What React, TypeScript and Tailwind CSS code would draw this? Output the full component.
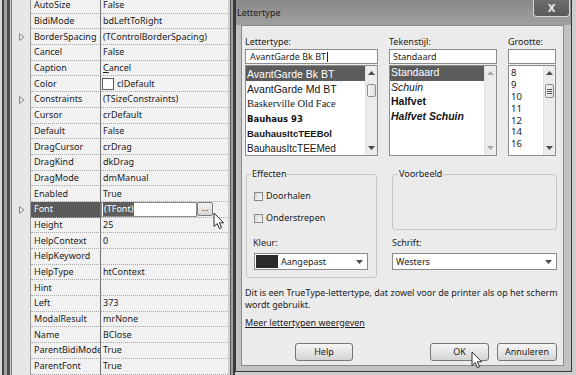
import React from 'react';

type Prop = {
  name: string;
  value: string;
  expand?: boolean;
  kind?: 'caption' | 'color' | 'font';
};

const props: Prop[] = [
  { name: 'AutoSize', value: 'False' },
  { name: 'BidiMode', value: 'bdLeftToRight' },
  { name: 'BorderSpacing', value: '(TControlBorderSpacing)', expand: true },
  { name: 'Cancel', value: 'False' },
  { name: 'Caption', value: 'Cancel', kind: 'caption' },
  { name: 'Color', value: 'clDefault', kind: 'color' },
  { name: 'Constraints', value: '(TSizeConstraints)', expand: true },
  { name: 'Cursor', value: 'crDefault' },
  { name: 'Default', value: 'False' },
  { name: 'DragCursor', value: 'crDrag' },
  { name: 'DragKind', value: 'dkDrag' },
  { name: 'DragMode', value: 'dmManual' },
  { name: 'Enabled', value: 'True' },
  { name: 'Font', value: '(TFont)', expand: true, kind: 'font' },
  { name: 'Height', value: '25' },
  { name: 'HelpContext', value: '0' },
  { name: 'HelpKeyword', value: '' },
  { name: 'HelpType', value: 'htContext' },
  { name: 'Hint', value: '' },
  { name: 'Left', value: '373' },
  { name: 'ModalResult', value: 'mrNone' },
  { name: 'Name', value: 'BClose' },
  { name: 'ParentBidiMode', value: 'True' },
  { name: 'ParentFont', value: 'True' },
];

const Pointer = ({ className }: { className: string }) => (
  <svg className={className} width="12" height="18" viewBox="0 0 12 18">
    <path
      d="M1 1 L1 14.5 L4.2 11.6 L6.4 16.6 L8.6 15.6 L6.4 10.8 L10.6 10.8 Z"
      fill="#fff"
      stroke="#2a2a2a"
      strokeWidth="1"
      strokeLinejoin="round"
    />
  </svg>
);

const Tri = () => (
  <svg width="6" height="8" viewBox="0 0 6 8">
    <path d="M0.5 0.5 L5 4 L0.5 7.5 Z" fill="none" stroke="#8c8c8c" />
  </svg>
);

const Up = ({ color = '#4a4a4a' }: { color?: string }) => (
  <svg width="7" height="4" viewBox="0 0 7 4">
    <path d="M0 4 L3.5 0 L7 4 Z" fill={color} />
  </svg>
);

const Down = ({ color = '#4a4a4a' }: { color?: string }) => (
  <svg width="7" height="4" viewBox="0 0 7 4">
    <path d="M0 0 L7 0 L3.5 4 Z" fill={color} />
  </svg>
);

function PropRow({ p }: { p: Prop }) {
  const sel = p.kind === 'font';
  return (
    <div className="flex h-[15.7px] shrink-0 leading-[14px]">
      <div className="w-[19px] flex items-center pl-[7px] bg-[#e7e7e7] border-r border-r-[#9c9c9c]">
        {p.expand && <Tri />}
      </div>
      <div
        className={`w-[70px] pl-[3px] flex items-center whitespace-nowrap overflow-hidden border-r border-r-[#707070] border-b border-b-[#a6a6a6] [border-bottom-style:dotted] ${
          sel ? 'bg-[#5b5b5b] text-white' : ''
        }`}
      >
        {p.name}
      </div>
      <div className="flex-1 flex items-center whitespace-nowrap overflow-hidden border-b border-b-[#a6a6a6] [border-bottom-style:dotted]">
        {p.kind === 'font' ? (
          <>
            <div className="w-[96px] h-full bg-white border border-[#8c8c8c] flex items-center pl-[1px]">
              <span className="bg-[#5e5e5e] text-white px-[1px]">{p.value}</span>
            </div>
            <div className="w-[16px] h-[14px] border border-[#7c7c7c] rounded-[2px] bg-linear-to-b from-[#f4f4f4] to-[#d6d6d6] flex items-center justify-center leading-[8px] pb-[3px] text-[#333]">
              ...
            </div>
          </>
        ) : p.kind === 'color' ? (
          <div className="flex items-center pl-[1px]">
            <div className="w-[12px] h-[12px] border border-[#5a5a5a] bg-white" />
            <span className="ml-[3px]">{p.value}</span>
          </div>
        ) : p.kind === 'caption' ? (
          <span className="pl-[2px]">
            <span className="underline">C</span>ancel
          </span>
        ) : (
          <span className="pl-[2px]">{p.value}</span>
        )}
      </div>
    </div>
  );
}

function Inspector() {
  return (
    <div className="flex w-[235px] h-full shrink-0">
      <div className="w-[2px] bg-[#d8d8d8]" />
      <div className="w-[2px] bg-[#404040]" />
      <div className="w-[3px] bg-[#a2a2a2]" />
      <div className="w-[3px] bg-[#4e4e4e]" />
      <div className="w-[1px] bg-[#d0d0d0]" />
      <div className="w-[1px] bg-[#777777]" />
      <div className="w-[216px] h-full overflow-hidden bg-[#f1f1f1]">
        <div className="flex flex-col -mt-[2px]">
          {props.map((p) => (
            <PropRow key={p.name} p={p} />
          ))}
        </div>
      </div>
      <div className="w-[2px] bg-[#d0d0d0]" />
      <div className="w-[1px] bg-[#555555]" />
      <div className="w-[2px] bg-[#a0a0a0]" />
      <div className="w-[2px] bg-[#3a3a3a]" />
    </div>
  );
}

function ScrollBar({ thumb, grip, disabled }: { thumb?: number; grip?: boolean; disabled?: boolean }) {
  const c = disabled ? '#a8a8a8' : '#4a4a4a';
  return (
    <div className="w-[12px] flex flex-col bg-[#ececec] border-l border-[#e0e0e0]">
      <div className="h-[14px] flex items-center justify-center">
        <Up color={c} />
      </div>
      <div className="flex-1">
        {thumb !== undefined && (
          <div
            className={`mx-[1px] border border-[#8e8e8e] rounded-[2px] bg-linear-to-r from-[#f6f6f6] to-[#dedede] flex flex-col items-center justify-center gap-[1px] ${
              thumb === 4 ? 'mt-[4px] h-[13px]' : 'mt-[4px] h-[14px]'
            }`}
          >
            {grip && (
              <>
                <div className="w-[5px] h-[1px] bg-[#555]" />
                <div className="w-[5px] h-[1px] bg-[#555]" />
                <div className="w-[5px] h-[1px] bg-[#555]" />
              </>
            )}
          </div>
        )}
      </div>
      <div className="h-[14px] flex items-center justify-center">
        <Down color={c} />
      </div>
    </div>
  );
}

const fontItems = [
  { label: 'AvantGarde Bk BT', cls: "font-['Liberation_Sans',sans-serif] text-[10.5px]" },
  { label: 'AvantGarde Md BT', cls: "font-['Liberation_Sans',sans-serif] text-[10.5px]" },
  { label: 'Baskerville Old Face', cls: "font-['Liberation_Serif',serif] text-[10.5px]" },
  { label: 'Bauhaus 93', cls: "font-['DejaVu_Sans',sans-serif] font-black text-[8.5px]" },
  { label: 'BauhausItcTEEBol', cls: "font-['Liberation_Sans',sans-serif] font-bold text-[9.5px]" },
  { label: 'BauhausItcTEEMed', cls: "font-['Liberation_Sans',sans-serif] text-[10px]" },
];

const styleItems = [
  { label: 'Standaard', cls: '' },
  { label: 'Schuin', cls: 'italic' },
  { label: 'Halfvet', cls: 'font-bold' },
  { label: 'Halfvet Schuin', cls: 'font-bold italic' },
];

const sizes = ['8', '9', '10', '11', '12', '14', '16'];

const Btn = ({ label, className }: { label: string; className: string }) => (
  <div
    className={`h-[18px] rounded-[3px] border border-[#767676] bg-linear-to-b from-[#f5f5f5] via-[#e6e6e6] to-[#d4d4d4] flex items-center justify-center ${className}`}
  >
    {label}
  </div>
);

function FontDialog() {
  return (
    <div className="w-[337px] shrink-0 flex flex-col">
      <div className="h-[372px] flex flex-col border-x border-b border-[#383838] bg-[#c2c2c2]">
        <div className="h-[25px] shrink-0 flex items-start justify-between bg-linear-to-b from-[#8a8a8a] to-[#a0a0a0]">
          <span className="pl-[1px] mt-[7px] leading-[12px] text-[#1e1e1e]">Lettertype</span>
          <div className="mr-[1px] w-[37px] h-[17px] rounded-b-[4px] border border-t-0 border-[#d6d6d6] bg-linear-to-b from-[#6e6e6e] to-[#5a5a5a] flex items-center justify-center text-[#e6e6e6] text-[10px] font-bold font-['DejaVu_Sans',sans-serif]">
            X
          </div>
        </div>
        <div className="flex-1 flex">
          <div className="w-[5px]" />
          <div className="w-[323px] flex flex-col border border-[#8a8a8a] bg-[#ebebeb] pl-[3px] pt-[10px]">
            <div className="flex">
              <div className="w-[133px] flex flex-col">
                <div className="h-[12px] leading-[12px]">Lettertype:</div>
                <div className="mt-[1px] h-[15px] bg-white border border-[#8c8c8c] flex items-center pl-[4px] leading-[12px]">
                  AvantGarde Bk BT<span className="w-[1px] h-[10px] bg-[#222] ml-[1px]" />
                </div>
                <div className="mt-[1px] h-[91px] bg-white border border-[#8c8c8c] flex">
                  <div className="flex-1 flex flex-col overflow-hidden">
                    {fontItems.map((f, i) => (
                      <div
                        key={f.label}
                        className={`h-[15px] shrink-0 flex items-center pl-[1px] whitespace-nowrap leading-[14px] ${f.cls} ${
                          i === 0 ? 'bg-[#5c5c5c] text-white' : 'text-[#141414]'
                        }`}
                      >
                        {f.label}
                      </div>
                    ))}
                  </div>
                  <ScrollBar thumb={4} />
                </div>
              </div>
              <div className="ml-[11px] w-[108px] flex flex-col">
                <div className="h-[12px] leading-[12px]">Tekenstijl:</div>
                <div className="mt-[1px] h-[15px] bg-white border border-[#8c8c8c] flex items-center pl-[3px] leading-[12px]">
                  Standaard
                </div>
                <div className="mt-[1px] h-[91px] bg-white border border-[#8c8c8c] flex">
                  <div className="flex-1 flex flex-col overflow-hidden">
                    {styleItems.map((s, i) => (
                      <div
                        key={s.label}
                        className={`h-[14.5px] shrink-0 flex items-center pl-[1px] whitespace-nowrap font-['Liberation_Sans',sans-serif] text-[10.5px] ${s.cls} ${
                          i === 0 ? 'bg-[#5c5c5c] text-white' : 'text-[#141414]'
                        }`}
                      >
                        {s.label}
                      </div>
                    ))}
                  </div>
                  <ScrollBar disabled />
                </div>
              </div>
              <div className="ml-[11px] w-[48px] flex flex-col">
                <div className="h-[12px] leading-[12px]">Grootte:</div>
                <div className="mt-[1px] h-[15px] bg-white border border-[#8c8c8c]" />
                <div className="mt-[1px] h-[91px] bg-white border border-[#8c8c8c] flex">
                  <div className="flex-1 flex flex-col overflow-hidden pt-[1px]">
                    {sizes.map((s) => (
                      <div key={s} className="h-[11.8px] shrink-0 flex items-center pl-[2px] text-[9.5px] leading-[11px]">
                        {s}
                      </div>
                    ))}
                  </div>
                  <ScrollBar thumb={5} grip />
                </div>
              </div>
            </div>

            <div className="flex mt-[18px]">
              <div className="ml-[1px] w-[131px] h-[104px] border border-[#c6c6c6] rounded-[3px] flex flex-col">
                <span className="-mt-[7px] ml-[4px] w-fit px-[1px] bg-[#ebebeb] leading-[12px]">Effecten</span>
                <div className="flex items-center h-[12px] ml-[7px] mt-[10px]">
                  <div className="w-[9px] h-[9px] border border-[#8a8a8a] bg-linear-to-br from-[#d8d8d8] to-[#fafafa]" />
                  <span className="ml-[3px]">Doorhalen</span>
                </div>
                <div className="flex items-center h-[12px] ml-[7px] mt-[10px]">
                  <div className="w-[9px] h-[9px] border border-[#8a8a8a] bg-linear-to-br from-[#d8d8d8] to-[#fafafa]" />
                  <span className="ml-[3px]">Onderstrepen</span>
                </div>
                <div className="ml-[6px] mt-[13px] h-[12px] leading-[12px]">Kleur:</div>
                <div className="ml-[7px] mt-[4px] w-[114px] h-[17px] bg-white border border-[#8c8c8c] flex items-center pl-[1px] pr-[4px]">
                  <div className="w-[22px] h-[13px] bg-[#2a2a2a]" />
                  <span className="ml-[3px] flex-1">Aangepast</span>
                  <Down />
                </div>
              </div>
              <div className="ml-[15px] w-[165px] flex flex-col">
                <div className="h-[56px] border border-[#c6c6c6] rounded-[3px] flex flex-col">
                  <span className="-mt-[7px] ml-[5px] w-fit px-[1px] bg-[#ebebeb] leading-[12px]">Voorbeeld</span>
                </div>
                <div className="mt-[7px] h-[12px] leading-[12px]">Schrift:</div>
                <div className="mt-[4px] h-[17px] bg-white border border-[#8c8c8c] flex items-center pl-[3px] pr-[4px]">
                  <span className="flex-1">Westers</span>
                  <Down />
                </div>
              </div>
            </div>

            <div className="mt-[9px] leading-[12px]">
              Dit is een TrueType-lettertype, dat zowel voor de printer als op het scherm
              <br />
              wordt gebruikt.
            </div>
            <div className="mt-[6px] leading-[12px] underline w-fit">Meer lettertypen weergeven</div>

            <div className="flex mt-[14px]">
              <Btn label="Help" className="ml-[50px] w-[58px]" />
              <Btn label="OK" className="ml-[77px] w-[59px] border-[#5a5a5a]" />
              <Btn label="Annuleren" className="ml-[8px] w-[60px]" />
            </div>
          </div>
          <div className="w-[7px]" />
        </div>
        <div className="h-[5px] shrink-0" />
      </div>
    </div>
  );
}

export default function App() {
  return (
    <div className="relative w-[576px] h-[375px] overflow-hidden flex bg-[#d0d0d0] text-[#1c1c1c] font-['Noto_Sans',sans-serif] text-[9px]">
      <Inspector />
      <FontDialog />
      <div className="w-[4px] bg-[#cdcdcd]" />
      <Pointer className="absolute left-[213px] top-[212px]" />
      <Pointer className="absolute left-[471px] top-[351px]" />
    </div>
  );
}
